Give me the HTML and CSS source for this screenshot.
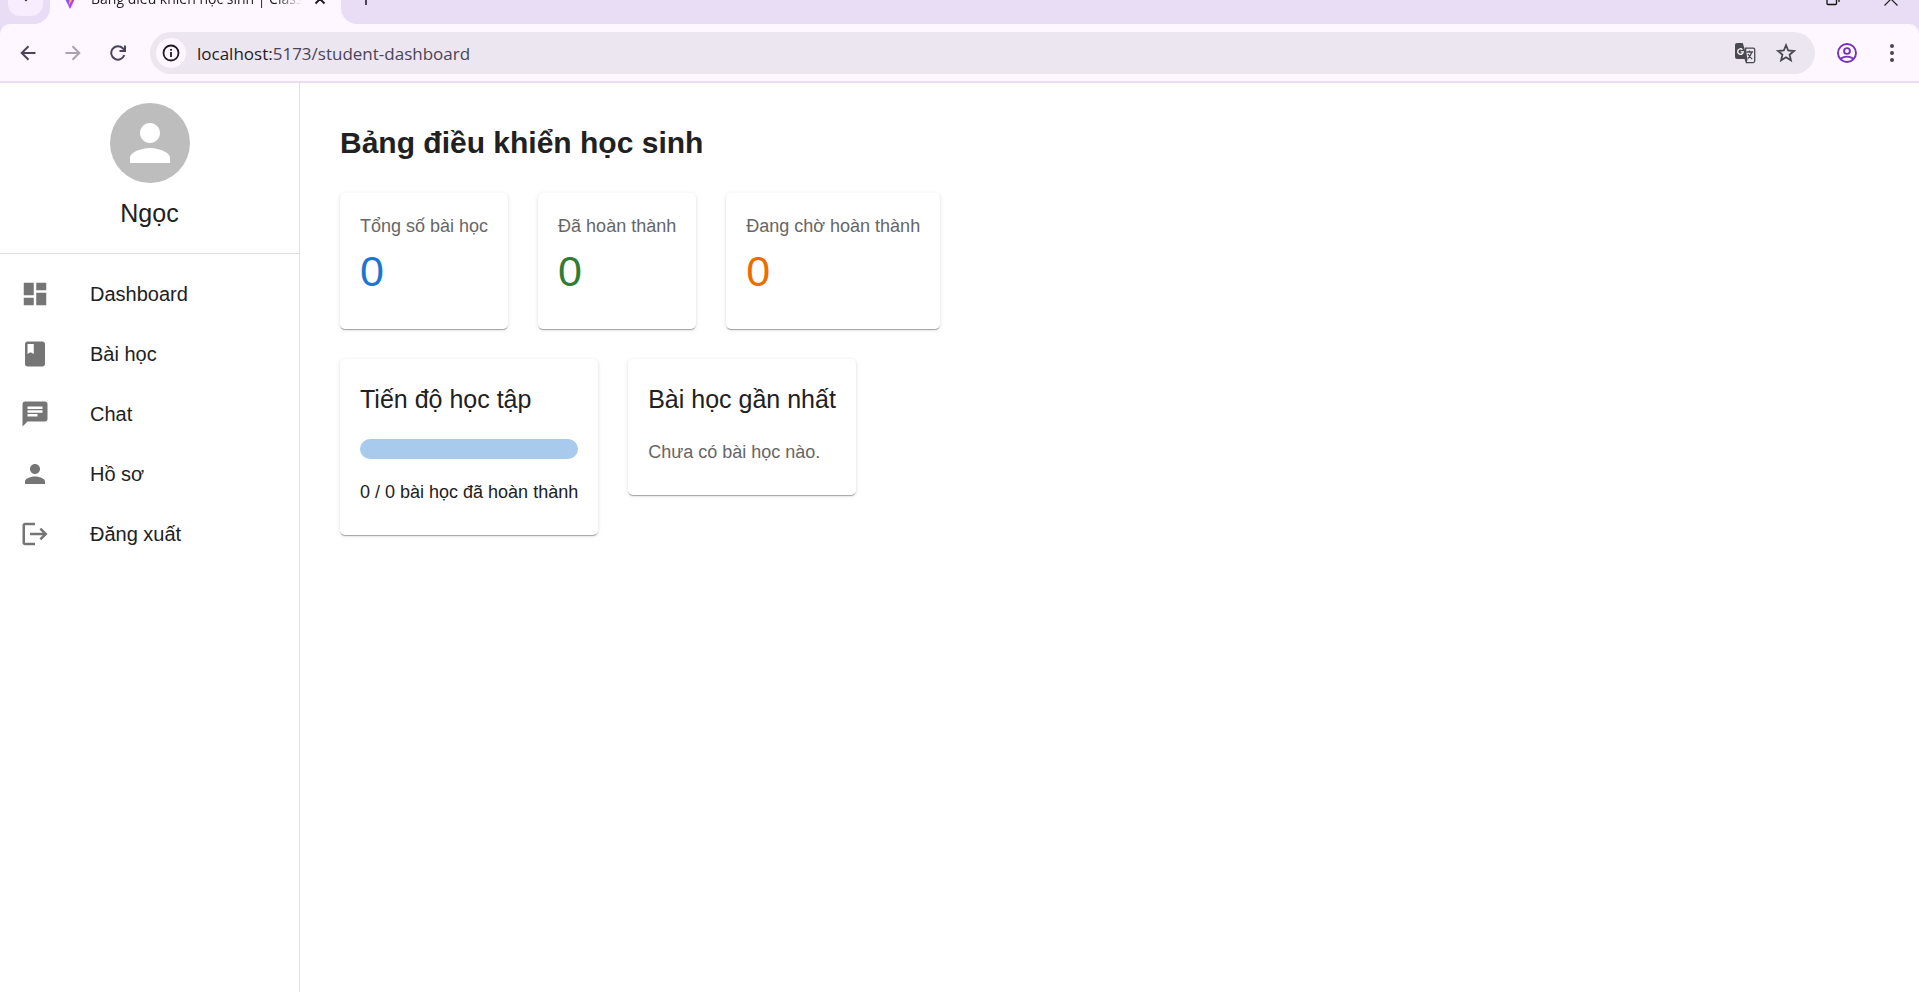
FILE: index.html
```html
<!DOCTYPE html>
<html lang="vi">
<head>
<meta charset="utf-8">
<title>Bảng điều khiển học sinh</title>
<link rel="stylesheet" href="styles.css">
</head>
<body>
<header class="browser">
  <div class="tabstrip">
    <div class="strip-left">
      <button class="tab-search" aria-label="Tìm thẻ"><svg width="10" height="10" viewBox="0 0 12 12"><path d="M1.500 3 6 7.500 10.500 3" fill="none" stroke="#1f1a27" stroke-width="2"/></svg></button>
    </div>
    <div class="tab">
      <svg class="tab-logo" width="18" height="20" viewBox="0 0 18 18" preserveAspectRatio="none">
        <defs><linearGradient id="vite" x1="0" y1="0" x2="1" y2="1"><stop offset="0" stop-color="#41a0ff"/><stop offset=".5" stop-color="#8f4dff"/><stop offset=".8" stop-color="#d02dff"/></linearGradient></defs>
        <path d="M0 1.500 9 0l9 1.500L9 18z" fill="url(#vite)"/><path d="M12.500 0 6.500 2 6 9h2.500l-.8 6L13 7h-3z" fill="#ffb52e"/>
      </svg>
      <span class="tab-title">Bảng điều khiển học sinh | Classroom</span>
      <button class="plain" aria-label="Đóng thẻ"><svg width="12" height="12" viewBox="0 0 12 12"><path d="M1.500 1.500l9 9M10.500 1.500l-9 9" stroke="#1f1a27" stroke-width="2"/></svg></button>
    </div>
    <div class="strip-right">
      <button class="plain" aria-label="Thẻ mới"><svg width="14" height="14" viewBox="0 0 14 14"><path d="M7 1v12M1 7h12" stroke="#4a4458" stroke-width="2"/></svg></button>
      <div class="window-buttons">
        <button class="plain" aria-label="Khôi phục"><svg width="14" height="14" viewBox="0 0 14 14" fill="none" stroke="#111" stroke-width="1.300"><rect x="1" y="3.500" width="9.500" height="9" rx="1"/><path d="M3.500 1h7Q13 1 13 3.500v6.500"/></svg></button>
        <button class="plain" aria-label="Đóng"><svg width="14" height="14" viewBox="0 0 14 14"><path d="M.5.5l13 13M13.500.5l-13 13" stroke="#222" stroke-width="1.200"/></svg></button>
      </div>
    </div>
  </div>
  <div class="toolbar-wrap">
    <div class="toolbar">
      <button class="plain nav" aria-label="Quay lại"><svg width="16" height="16" viewBox="0 0 16 16" fill="none" stroke="#4a4458" stroke-width="2"><path d="M15.500 8H2M8.500 1.200 1.700 8l6.800 6.800"/></svg></button>
      <button class="plain nav" aria-label="Tiến"><svg width="16" height="16" viewBox="0 0 16 16" fill="none" stroke="#aaa3b0" stroke-width="2"><path d="M.5 8H14M7.500 1.200 14.300 8l-6.800 6.800"/></svg></button>
      <button class="plain nav" aria-label="Tải lại"><svg width="16" height="16" viewBox="0 0 16 16" fill="none" stroke="#4a4458" stroke-width="2"><path d="M14.300 10A6.700 6.700 0 1 1 12.800 3.300L14.500 5"/><path d="M15 .5V6H9.500"/></svg></button>
      <div class="address">
        <button class="site-info" aria-label="Thông tin trang"><svg width="18" height="18" viewBox="0 0 18 18"><circle cx="9" cy="9" r="7.500" fill="none" stroke="#1f1a27" stroke-width="1.800"/><path d="M8.100 8h1.800v5H8.100zM8.100 5h1.800v1.800H8.100z" fill="#1f1a27"/></svg></button>
        <span class="url">localhost:<span class="path">5173/student-dashboard</span></span>
        <button class="plain" aria-label="Dịch trang này"><svg width="21" height="21" viewBox="0 0 21 21"><path d="M10.500 5.200h7.700a1.500 1.500 0 0 1 1.500 1.500v11.400a1.500 1.500 0 0 1-1.500 1.500h-6.700z" fill="none" stroke="#4a4850" stroke-width="1.300"/><path d="M2 0h5.800l4.700 16H2a2 2 0 0 1-2-2V2a2 2 0 0 1 2-2zM9.500 16h3.200l-1.500 4.500z" fill="#4a4850"/><path d="M7.500 6.600A2.800 2.800 0 1 0 8.300 8.800H5.700" fill="none" stroke="#fff" stroke-width="1.300"/><path d="M11.500 9h6.500M14.500 7.500V9M16.800 9q-1.300 4.500-4 6.500M13 11q2 3.500 4.200 5" fill="none" stroke="#4a4850" stroke-width="1.300"/></svg></button>
        <button class="plain" aria-label="Đánh dấu trang"><svg width="20" height="20" viewBox="0 0 20 20"><path d="M10 2.200l2.200 5.300 5.700.5-4.300 3.700 1.300 5.600L10 14.300l-4.900 3 1.300-5.600L2.100 8l5.700-.5z" fill="none" stroke="#4a4850" stroke-width="1.800"/></svg></button>
      </div>
      <button class="plain profile" aria-label="Hồ sơ trình duyệt"><svg width="20" height="20" viewBox="0 0 20 20" fill="none" stroke="#7132bd" stroke-width="1.900"><circle cx="10" cy="10" r="9"/><circle cx="10" cy="8" r="2.900"/><path d="M3.500 15.800Q10 11.500 16.500 15.800"/></svg></button>
      <button class="plain" aria-label="Menu"><svg width="6" height="20" viewBox="0 0 6 20" fill="#4a4458"><circle cx="3" cy="3" r="2"/><circle cx="3" cy="10" r="2"/><circle cx="3" cy="17" r="2"/></svg></button>
    </div>
  </div>
</header>
<div class="page">
  <aside class="sidebar">
    <div class="user">
      <div class="avatar"><svg width="60" height="60" viewBox="0 0 24 24"><path d="M12 12c2.210 0 4-1.790 4-4s-1.790-4-4-4-4 1.790-4 4 1.790 4 4 4m0 2c-2.670 0-8 1.340-8 4v2h16v-2c0-2.660-5.330-4-8-4"/></svg></div>
      <div class="user-name">Ngọc</div>
    </div>
    <nav class="menu">
      <a href="#" class="item"><svg viewBox="0 0 24 24"><path d="M3 13h8V3H3zm0 8h8v-6H3zm10 0h8V11h-8zm0-18v6h8V3z"/></svg>Dashboard</a>
      <a href="#" class="item"><svg viewBox="0 0 24 24"><path d="M18 2H6c-1.100 0-2 .9-2 2v16c0 1.100.9 2 2 2h12c1.100 0 2-.9 2-2V4c0-1.100-.9-2-2-2M6 4h5v8l-2.500-1.500L6 12z"/></svg>Bài học</a>
      <a href="#" class="item"><svg viewBox="0 0 24 24"><path d="M20 2H4c-1.100 0-1.990.9-1.990 2L2 22l4-4h14c1.100 0 2-.9 2-2V4c0-1.100-.9-2-2-2M6 9h12v2H6zm8 5H6v-2h8zm4-6H6V6h12z"/></svg>Chat</a>
      <a href="#" class="item"><svg viewBox="0 0 24 24"><path d="M12 12c2.210 0 4-1.790 4-4s-1.790-4-4-4-4 1.790-4 4 1.790 4 4 4m0 2c-2.670 0-8 1.340-8 4v2h16v-2c0-2.660-5.330-4-8-4"/></svg>Hồ sơ</a>
      <a href="#" class="item"><svg viewBox="0 0 24 24"><path d="M17 7l-1.410 1.410L18.170 11H8v2h10.170l-2.580 2.580L17 17l5-5zM4 5h8V3H4c-1.100 0-2 .9-2 2v14c0 1.100.9 2 2 2h8v-2H4z"/></svg>Đăng xuất</a>
    </nav>
  </aside>
  <main class="content">
    <h1>Bảng điều khiển học sinh</h1>
    <section class="row">
      <div class="card"><div class="label">Tổng số bài học</div><div class="count blue">0</div></div>
      <div class="card"><div class="label">Đã hoàn thành</div><div class="count green">0</div></div>
      <div class="card"><div class="label">Đang chờ hoàn thành</div><div class="count orange">0</div></div>
    </section>
    <section class="row">
      <div class="card">
        <h2>Tiến độ học tập</h2>
        <div class="bar" role="progressbar" aria-label="Tiến độ" aria-valuenow="0" aria-valuemin="0" aria-valuemax="100"></div>
        <div class="note">0 / 0 bài học đã hoàn thành</div>
      </div>
      <div class="card">
        <h2>Bài học gần nhất</h2>
        <div class="label">Chưa có bài học nào.</div>
      </div>
    </section>
  </main>
</div>
</body>
</html>
```
FILE: styles.css
```css
* { box-sizing: border-box; }
body {
  margin: 0;
  min-height: 100vh;
  display: flex;
  flex-direction: column;
  background: #fff;
  color: #212121;
  font-family: "Liberation Sans", Arial, sans-serif;
}
svg { display: block; flex: none; }
button { font: inherit; cursor: pointer; }
.plain { border: 0; padding: 0; background: none; }

.browser {
  background: #fef7ff;
  border-bottom: 2px solid #e8def0;
  font-family: "Open Sans", "Noto Sans", sans-serif;
}
.tabstrip {
  height: 24px;
  display: flex;
  align-items: flex-end;
  overflow: hidden;
}
.strip-left, .strip-right, .tab { height: 50px; flex: none; display: flex; align-items: center; }
.strip-left {
  width: 50px;
  padding-left: 8px;
  background: #e8ddf5;
  border-bottom-right-radius: 16px;
}
.tab-search {
  width: 35px;
  height: 34px;
  border: 0;
  border-radius: 12px;
  padding: 0;
  background: #f8edff;
  display: grid;
  place-items: center;
}
.tab { width: 291px; padding: 0 15px 0 11px; gap: 12px; }
.tab-title {
  flex: 1;
  font-size: 14px;
  line-height: 24px;
  color: #1f1a27;
  white-space: nowrap;
  overflow: hidden;
  mask-image: linear-gradient(to right, #000 88%, transparent);
}
.strip-right {
  flex: 1;
  justify-content: space-between;
  padding: 0 21px 0 18px;
  background: #e8ddf5;
  border-bottom-left-radius: 16px;
}
.window-buttons { display: flex; gap: 44px; }
.toolbar-wrap { background: #e8ddf5; }
.toolbar {
  display: flex;
  align-items: center;
  padding: 8px 24px 7px 20px;
  background: #fef7ff;
  border-radius: 10px 10px 0 0;
}
.nav { margin-right: 29px; }
.nav:nth-child(3) { margin-right: 24px; }
.address {
  flex: 1;
  height: 42px;
  display: flex;
  align-items: center;
  gap: 20px;
  padding: 0 19px 0 6px;
  background: #ece6f0;
  border-radius: 21px;
}
.site-info {
  width: 30px;
  height: 30px;
  border: 0;
  border-radius: 50%;
  padding: 0;
  background: #fef7ff;
  display: grid;
  place-items: center;
}
.url { flex: 1; margin-left: -9px; font-size: 17px; color: #1f1a27; }
.path { color: #4a4458; }
.profile { margin: 0 32px 0 22px; }

.page { flex: 1; display: flex; }
.sidebar { width: 300px; flex: none; border-right: 1px solid #e0e0e0; }
.user {
  display: flex;
  flex-direction: column;
  align-items: center;
  padding: 20px;
  border-bottom: 1px solid #e0e0e0;
}
.avatar {
  width: 80px;
  height: 80px;
  border-radius: 50%;
  background: #bdbdbd;
  fill: #fff;
  display: grid;
  place-items: center;
}
.user-name { margin-top: 10px; font-size: 25px; line-height: 40px; }
.menu { padding: 10px 0; }
.item {
  height: 60px;
  display: flex;
  align-items: center;
  gap: 40px;
  padding: 0 20px;
  font-size: 20px;
  color: #212121;
  text-decoration: none;
}
.item svg { width: 30px; height: 30px; fill: #757575; }

.content { flex: 1; padding: 40px; }
h1 { margin: 0 0 30px; font-size: 30px; line-height: 40px; }
h2 { margin: 0 0 20px; font-size: 25px; line-height: 40px; font-weight: 400; }
.row { display: flex; align-items: flex-start; gap: 30px; margin-bottom: 30px; }
.card {
  padding: 20px 20px 30px;
  border-radius: 5px;
  background: #fff;
  box-shadow: 0 2px 1px -1px rgba(0, 0, 0, .2), 0 1px 1px rgba(0, 0, 0, .14), 0 1px 4px rgba(0, 0, 0, .12);
}
.label, .note { font-size: 18px; line-height: 26px; }
.label { color: #666; }
.count { padding: 6px 0 2px; font-size: 43px; line-height: 52px; }
.blue { color: #1976d2; }
.green { color: #2e7d32; }
.orange { color: #ed6c02; }
.bar { height: 20px; margin-bottom: 20px; border-radius: 10px; background: #a7caed; }
```
